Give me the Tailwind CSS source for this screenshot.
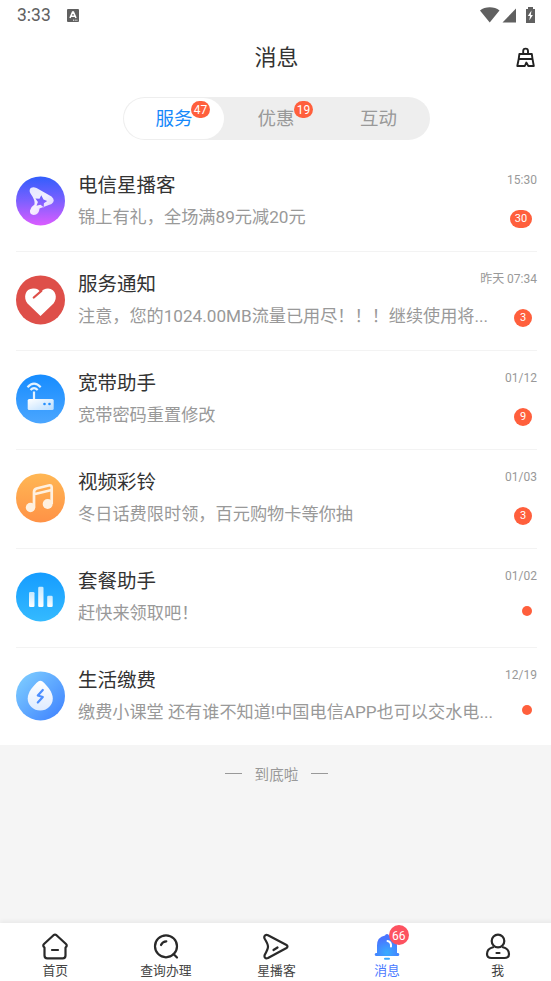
<!DOCTYPE html>
<html lang="zh-CN">
<head>
<meta charset="utf-8">
<meta name="viewport" content="width=device-width, initial-scale=1">
<title>消息</title>
<script src="https://cdn.jsdelivr.net/npm/@tailwindcss/browser@4"></script>
</head>
<body class="h-[981px] w-[551px] overflow-hidden bg-[#f5f5f5] font-[Roboto,'Noto_Sans_CJK_SC',sans-serif] font-normal text-[#333]">
<div class="flex h-full flex-col">
  <div class="flex h-[30px] shrink-0 items-center bg-white pl-[17px] pr-[15px] text-[#606060]">
    <span class="text-[17.500px] leading-[30px]">3:33</span>
    <svg class="ml-4 h-[13px] w-[12px]" viewBox="0 0 12 13"><rect width="12" height="13" rx="1" fill="#606060"/><path d="M3 9 5.600 3h.8L9 9M4 7.200h4" fill="none" stroke="#fff" stroke-width="1.600"/><path d="M6 11.200h5" stroke="#fff" stroke-dasharray="1 .7"/></svg>
    <svg class="ml-auto h-[16px] w-[56px]" viewBox="0 0 56 16"><g fill="#606060"><path d="M0 3.500C5-.8 14.500-.8 19.500 3.500L9.700 15.500Z"/><path d="M36 1.500V15.500H22.500Z"/><path d="M46 2h2V0h5v2h2v14h-9Z"/></g><path d="m51.500 3.500-3.700 5.500h2.200l-.7 4.500 3.600-5.500h-2.100Z" fill="#fff"/></svg>
  </div>
  <header class="relative flex h-[54px] shrink-0 items-center justify-center bg-white pl-[2px] pt-[2px]">
    <h1 class="text-[22px] leading-8">消息</h1>
    <svg class="absolute right-[16px] top-[17px] h-[21px] w-[19px]" viewBox="0 0 19 21" fill="none" stroke="#222" stroke-width="1.900" stroke-linejoin="round"><path d="M7.200 7V4a2.400 2.400 0 0 1 4.800 0v3M3.400 7h12.400l.7 5H2.700ZM2.700 12 1.300 19h7.500l1.500-3.500 2 3.500h5.500l-1.300-7"/></svg>
  </header>
  <nav class="flex h-[69px] shrink-0 items-start justify-center bg-white pl-[2px] pt-[13px]">
    <div class="flex h-[43px] w-[307px] rounded-full bg-[#eee] p-px text-[18.500px] text-[#999]">
      <div class="relative flex w-[100px] items-center justify-center rounded-full bg-white pt-[3px] text-[#1689fa]">服务<span class="absolute right-[14px] top-[3px] flex h-[17px] w-[19px] items-center justify-center rounded-full bg-[#ff5f3c] pt-px text-[12px] text-white">47</span></div>
      <div class="relative flex w-[104px] items-center justify-center pt-[3px]">优惠<span class="absolute right-[15px] top-[3px] flex h-[17px] w-[19px] items-center justify-center rounded-full bg-[#ff5f3c] pt-px text-[12px] text-white">19</span></div>
      <div class="flex w-[101px] items-center justify-center pt-[3px]">互动</div>
    </div>
  </nav>
  <main class="shrink-0 bg-white">
    <article class="flex h-[99px] pl-4 pr-[14px]">
      <svg class="mt-[23px] size-[50px] -mr-px shrink-0" viewBox="0 0 50 50"><defs><linearGradient id="a" x2="0" y2="1"><stop stop-color="#315efc"/><stop offset=".5" stop-color="#7c60ff"/><stop offset="1" stop-color="#db5cff"/></linearGradient><linearGradient id="w" x2="1" y2="1"><stop stop-color="#fff" stop-opacity=".85"/><stop offset=".5" stop-color="#fff" stop-opacity=".9"/><stop offset="1" stop-color="#fff" stop-opacity=".65"/></linearGradient></defs><circle cx="24.500" cy="24.900" r="24.500" fill="url(#a)"/><path fill="url(#w)" fill-rule="evenodd" d="M14.500 17.500C12 13 15.500 9.500 20.500 12L35.500 20.500Q40 24.500 35.500 28L23.500 32.500Q23 39 17.800 39Q13.500 38.500 14 34.500Q15 30.500 18.500 28.500Q19.500 24.500 14.500 17.500ZM25.300 19.300 23.500 22.700 19.400 22.500 21.900 25.900 20.500 29.800 24.500 28.700 27.700 31.200 27.900 27.200 31.200 25 27.500 23.400Z"/></svg>
      <div class="ml-[13px] min-w-0 flex-1 whitespace-nowrap pt-[17px]"><h2 class="text-[19.500px] leading-8">电信星播客</h2><p class="-mt-px text-[17.200px] leading-8 text-[#999]">锦上有礼，全场满89元减20元</p></div>
      <div class="flex w-[60px] shrink-0 flex-col items-end pt-[19px]"><time class="text-[12px] leading-[17px] text-[#999]">15:30</time><span class="mr-[5px] mt-[21px] flex h-[18px] w-[22px] items-center justify-center rounded-full bg-[#ff5f3c] pt-px text-[11px] text-white">30</span></div>
    </article>
    <div class="ml-4 mr-[14px] -mt-px h-px bg-[#f3f3f3]"></div>
    <article class="flex h-[99px] pl-4 pr-[14px]">
      <svg class="mt-[23px] size-[50px] -mr-px shrink-0" viewBox="0 0 50 50"><circle cx="24.500" cy="24.900" r="24.500" fill="#de4f49"/><path fill="#fff" d="M24.500 41 11.500 28.500C7 23 9 13.500 17 13.500Q20 13.200 22 14.500L24.500 17Q27.500 13.500 32 13.500C40 14 42 23 37.500 28.500Z"/><path d="m17.800 22.500 7.500-6.500" stroke="#de4f49" stroke-width="2.300" stroke-linecap="round"/></svg>
      <div class="ml-[13px] min-w-0 flex-1 whitespace-nowrap pt-[17px]"><h2 class="text-[19.500px] leading-8">服务通知</h2><p class="-mt-px text-[17.150px] leading-8 text-[#999]">注意，您的1024.00MB流量已用尽！！！继续使用将...</p></div>
      <div class="flex w-[44px] shrink-0 flex-col items-end whitespace-nowrap pt-[19px]"><time class="text-[12px] leading-[17px] text-[#999]">昨天 07:34</time><span class="mr-[5px] mt-[21px] flex size-[18px] items-center justify-center rounded-full bg-[#ff5f3c] pt-px text-[11px] text-white">3</span></div>
    </article>
    <div class="ml-4 mr-[14px] -mt-px h-px bg-[#f3f3f3]"></div>
    <article class="flex h-[99px] pl-4 pr-[14px]">
      <svg class="mt-[23px] size-[50px] -mr-px shrink-0" viewBox="0 0 50 50"><defs><linearGradient id="c" x2="0" y2="1"><stop stop-color="#168cff"/><stop offset="1" stop-color="#4ba6ff"/></linearGradient><linearGradient id="c2" x2="1" y2="1"><stop stop-color="#fff"/><stop offset="1" stop-color="#b9ddff"/></linearGradient></defs><circle cx="24.500" cy="24.900" r="24.500" fill="url(#c)"/><path d="M11.500 13.200Q18 6 24.700 13.200M14.500 16Q18 12.300 21.700 16M18 17.500V26" fill="none" stroke="#e5f3ff" stroke-width="2.200"/><rect x="11.700" y="25" width="26" height="11" rx="1.500" fill="url(#c2)"/><circle cx="28.500" cy="30" r="1.300" fill="#238fff"/><circle cx="33.500" cy="30" r="1.300" fill="#238fff"/></svg>
      <div class="ml-[13px] min-w-0 flex-1 whitespace-nowrap pt-[17px]"><h2 class="text-[19.500px] leading-8">宽带助手</h2><p class="-mt-px text-[17.200px] leading-8 text-[#999]">宽带密码重置修改</p></div>
      <div class="flex w-[60px] shrink-0 flex-col items-end pt-[19px]"><time class="text-[12px] leading-[17px] text-[#999]">01/12</time><span class="mr-[5px] mt-[21px] flex size-[18px] items-center justify-center rounded-full bg-[#ff5f3c] pt-px text-[11px] text-white">9</span></div>
    </article>
    <div class="ml-4 mr-[14px] -mt-px h-px bg-[#f3f3f3]"></div>
    <article class="flex h-[99px] pl-4 pr-[14px]">
      <svg class="mt-[23px] size-[50px] -mr-px shrink-0" viewBox="0 0 50 50"><defs><linearGradient id="d" x2="0" y2="1"><stop stop-color="#ffb754"/><stop offset="1" stop-color="#ff9246"/></linearGradient></defs><circle cx="24.500" cy="24.900" r="24.500" fill="url(#d)"/><g fill="#fff0df"><circle cx="14.500" cy="34.500" r="4.700"/><circle cx="31.700" cy="31" r="5"/></g><path d="M18 34.500V19Q18 16.500 20.500 15.500L33.500 12.300Q35.700 12 35.700 14.500V31M18 21.300 35.700 17" fill="none" stroke="#fff0df" stroke-width="2.700"/></svg>
      <div class="ml-[13px] min-w-0 flex-1 whitespace-nowrap pt-[17px]"><h2 class="text-[19.500px] leading-8">视频彩铃</h2><p class="-mt-px text-[17.200px] leading-8 text-[#999]">冬日话费限时领，百元购物卡等你抽</p></div>
      <div class="flex w-[60px] shrink-0 flex-col items-end pt-[19px]"><time class="text-[12px] leading-[17px] text-[#999]">01/03</time><span class="mr-[5px] mt-[21px] flex size-[18px] items-center justify-center rounded-full bg-[#ff5f3c] pt-px text-[11px] text-white">3</span></div>
    </article>
    <div class="ml-4 mr-[14px] -mt-px h-px bg-[#f3f3f3]"></div>
    <article class="flex h-[99px] pl-4 pr-[14px]">
      <svg class="mt-[23px] size-[50px] -mr-px shrink-0" viewBox="0 0 50 50"><defs><linearGradient id="e" x2="0" y2="1"><stop stop-color="#159cff"/><stop offset="1" stop-color="#34baff"/></linearGradient><linearGradient id="e2" x2="0" y2="1"><stop stop-color="#c4e9ff"/><stop offset="1" stop-color="#fff"/></linearGradient></defs><circle cx="24.500" cy="24.900" r="24.500" fill="url(#e)"/><g fill="url(#e2)"><rect x="13" y="20" width="5.500" height="15" rx="1.300"/><rect x="22.200" y="14.700" width="5.300" height="20.300" rx="1.300"/><rect x="31.200" y="23.700" width="5.500" height="11.300" rx="1.300"/></g></svg>
      <div class="ml-[13px] min-w-0 flex-1 whitespace-nowrap pt-[17px]"><h2 class="text-[19.500px] leading-8">套餐助手</h2><p class="-mt-px text-[17.200px] leading-8 text-[#999]">赶快来领取吧！</p></div>
      <div class="flex w-[60px] shrink-0 flex-col items-end pt-[19px]"><time class="text-[12px] leading-[17px] text-[#999]">01/02</time><span class="mr-[5px] mt-[21px] size-[10px] rounded-full bg-[#ff5f3c]"></span></div>
    </article>
    <div class="ml-4 mr-[14px] -mt-px h-px bg-[#f3f3f3]"></div>
    <article class="flex h-[97px] pl-4 pr-[14px]">
      <svg class="mt-[23px] size-[50px] -mr-px shrink-0" viewBox="0 0 50 50"><defs><linearGradient id="f" x2="1" y2="1"><stop stop-color="#82d2ff"/><stop offset="1" stop-color="#3c7fff"/></linearGradient><linearGradient id="f2" x2="0" y2="1"><stop stop-color="#fff"/><stop offset="1" stop-color="#deebff"/></linearGradient></defs><circle cx="24.500" cy="24.900" r="24.500" fill="url(#f)"/><path fill="url(#f2)" d="M22.200 10.500Q24.300 9 26.500 10.500C31 14.500 36.800 21 36.800 27.500A12.500 12 0 0 1 11.700 27.500C11.700 21 17.500 14.500 22.200 10.500Z"/><path d="m26.800 19-5 5.500 5 1.500-5 5.500" fill="none" stroke="#4d8fff" stroke-width="2.200" stroke-linejoin="round" stroke-linecap="round"/></svg>
      <div class="ml-[13px] min-w-0 flex-1 whitespace-nowrap pt-[17px]"><h2 class="text-[19.500px] leading-8">生活缴费</h2><p class="-mt-px text-[17.150px] leading-8 text-[#999]">缴费小课堂 还有谁不知道!中国电信APP也可以交水电...</p></div>
      <div class="flex w-[40px] shrink-0 flex-col items-end pt-[19px]"><time class="text-[12px] leading-[17px] text-[#999]">12/19</time><span class="mr-[5px] mt-[21px] size-[10px] rounded-full bg-[#ff5f3c]"></span></div>
    </article>
  </main>
  <div class="flex flex-1 items-start justify-center gap-[13px] pl-[2px] pt-[19px] text-[14.600px] leading-[22px] text-[#999]"><span class="mt-[9px] h-px w-[17px] bg-[#999]"></span>到底啦<span class="mt-[9px] h-px w-[17px] bg-[#999]"></span></div>
  <footer class="grid h-[58px] w-[553px] shrink-0 grid-cols-5 bg-white pt-[9px] text-center text-[12.800px] leading-[20px] text-[#444] shadow-[0_-2px_4px_rgba(0,0,0,0.05)]">
    <div class="flex flex-col items-center"><svg class="size-7" viewBox="0 0 28 28" fill="none" stroke="#292929" stroke-width="2.200" stroke-linejoin="round" stroke-linecap="round"><path d="M12.500 3.200Q14 2.200 15.500 3.200L25 12Q26.700 13.700 24.500 15.500V23.500Q24.500 26.300 21.700 26.300H6.300Q3.500 26.300 3.500 23.500V15.500Q1.300 13.700 3 12ZM11 18h6"/></svg><span class="mt-px">首页</span></div>
    <div class="flex flex-col items-center"><svg class="size-7" viewBox="0 0 28 28" fill="none" stroke="#292929" stroke-width="2.200" stroke-linecap="round"><circle cx="14" cy="14.300" r="11"/><path d="m21.500 22 3.500 3.500M9 13Q10.500 9.500 14.300 9.300"/></svg><span class="mt-px">查询办理</span></div>
    <div class="flex flex-col items-center"><svg class="size-7" viewBox="0 0 28 28" fill="none" stroke="#292929" stroke-width="2.200" stroke-linejoin="round" stroke-linecap="round"><path d="M2.500 6.500C1.500 3.500 4 2.200 6 3.200L24.500 13Q26.500 14.500 24.500 16L6 26C3.500 27 1.800 25.500 2.800 22.700Q6 17 6 14.700Q6 12 2.500 6.500ZM11.500 18l4-2.500"/></svg><span class="mt-px">星播客</span></div>
    <div class="relative flex flex-col items-center text-[#4a79ff]"><svg class="size-7" viewBox="0 0 28 28"><defs><radialGradient id="b" cx=".5" cy=".85" r=".65"><stop stop-color="#39acff"/><stop offset="1" stop-color="#4975ff"/></radialGradient></defs><path fill="url(#b)" d="M12 3.500Q12.300 2 14 2Q15.700 2 16 3.500Q24 5 24 13.500V21H25Q26.300 21 26.300 22.500T25 23.900H3Q1.700 23.900 1.700 22.500T3 21H4V13.500Q4 5 12 3.500Z"/><path d="M12 26.800h4" stroke="#39a9ff" stroke-width="2" stroke-linecap="round"/><path d="M14.500 9Q18.500 10 18 14.500" fill="none" stroke="#fff" stroke-width="2" stroke-linecap="round"/></svg><span class="mt-px">消息</span><span class="absolute left-[57px] top-[-7px] flex size-5 items-center justify-center rounded-full bg-[#fd5260] pt-px text-[12px] text-white">66</span></div>
    <div class="flex flex-col items-center"><svg class="size-7" viewBox="0 0 28 28" fill="none" stroke="#292929" stroke-width="2.200" stroke-linecap="round"><circle cx="14" cy="9" r="6.300"/><path d="M9 15.300C4.500 16.500 3 19 3 22Q3 26 7.500 26H20.500Q25 26 25 22C25 19 23.500 16.500 19 15.300M12.500 21h3"/></svg><span class="mt-px">我</span></div>
  </footer>
</div>
</body>
</html>
